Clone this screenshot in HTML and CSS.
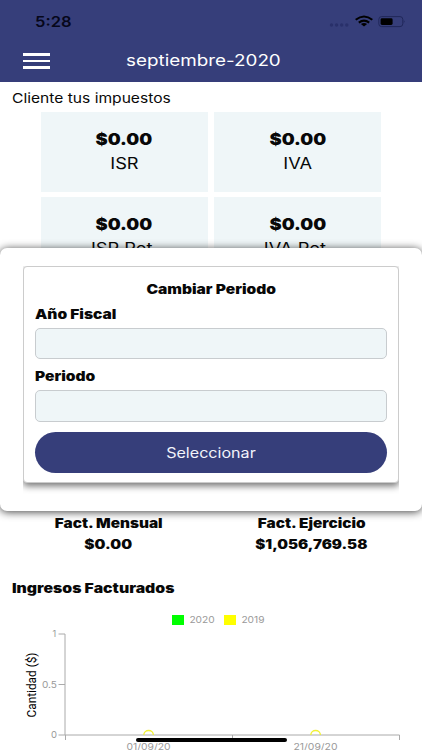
FILE: index.html
```html
<!DOCTYPE html>
<html lang="es">
<head>
  <meta charset="UTF-8" />
  <meta name="viewport" content="width=device-width, initial-scale=1.0" />
  <title>Impuestos</title>
  <link rel="stylesheet" href="styles.css">
</head>
<body>
  <header class="header">
    <div class="status-bar">
      <span class="time">5:28</span>
      <svg class="status-icons" width="76" height="14" viewBox="0 0 76 14">
        <g fill="#29306a">
          <circle cx="2.5" cy="11" r="1.7"/><circle cx="7.6" cy="11" r="1.7"/>
          <circle cx="12.7" cy="11" r="1.7"/><circle cx="17.8" cy="11" r="1.7"/>
        </g>
        <g fill="none" stroke="#000" stroke-width="2">
          <path d="M26.7 5.8Q35 -0.8 43.3 5.8"/>
          <path d="M29.8 8.6Q35 4.6 40.2 8.6"/>
        </g>
        <path d="M31.9 10Q35 7.8 38.1 10L35 12.6Z"/>
        <rect x="49.8" y="2.6" width="24" height="10" rx="2.8" fill="none" stroke="#20275a"/>
        <rect x="51.6" y="4.3" width="12" height="6.7" rx="1.4"/>
        <path d="M74.8 6Q76.6 7.6 74.8 9.3Z" fill="#20275a"/>
      </svg>
    </div>
    <div class="nav-bar">
      <div class="menu-icon"><i></i><i></i><i></i></div>
      <h1 class="title"><span>septiembre-2020</span></h1>
    </div>
  </header>

  <main>
    <p class="intro"><span>Cliente tus impuestos</span></p>

    <div class="taxes">
      <div class="tax"><strong>$0.00</strong><span>ISR</span></div>
      <div class="tax"><strong>$0.00</strong><span>IVA</span></div>
      <div class="tax"><strong>$0.00</strong><span>ISR Ret.</span></div>
      <div class="tax"><strong>$0.00</strong><span>IVA Ret.</span></div>
    </div>

    <div class="totals">
      <div class="total"><span>Fact. Mensual</span><span>$0.00</span></div>
      <div class="total"><span>Fact. Ejercicio</span><span class="amount">$1,056,769.58</span></div>
    </div>

    <h2 class="section-title"><span>Ingresos Facturados</span></h2>

    <div class="legend">
      <i class="green"></i><span>2020</span>
      <i class="yellow"></i><span>2019</span>
    </div>

    <svg class="chart" width="422" height="125" viewBox="0 625 422 125">
      <g fill="none" stroke="#aaa">
        <path d="M58.5 634H65V735M58.5 684.5H65M58.5 735H399.5M65.5 735V740M232.5 735V740M399.5 735V740"/>
      </g>
      <g fill="none" stroke="#f1f135" stroke-width="1.3">
        <path d="M143.8 735A4.8 4.5 0 0 1 153.4 735"/>
        <path d="M310.8 735A4.8 4.5 0 0 1 320.4 735"/>
      </g>
      <g class="ticks">
        <text x="52.5" y="637">1</text>
        <text x="42" y="688" textLength="15" lengthAdjust="spacingAndGlyphs">0.5</text>
        <text x="51" y="738" textLength="6" lengthAdjust="spacingAndGlyphs">0</text>
        <text x="126.5" y="749.5" textLength="44" lengthAdjust="spacingAndGlyphs">01/09/20</text>
        <text x="293.5" y="749.5" textLength="44" lengthAdjust="spacingAndGlyphs">21/09/20</text>
      </g>
      <text class="axis-name" transform="translate(35.5 717.5) rotate(-90)" textLength="65" lengthAdjust="spacingAndGlyphs">Cantidad ($)</text>
    </svg>
  </main>

  <div class="modal">
    <div class="modal-clip">
      <form class="period-form">
        <h3><span>Cambiar Periodo</span></h3>
        <label for="year"><span>Año Fiscal</span></label>
        <input id="year" type="text">
        <label for="period"><span>Periodo</span></label>
        <input id="period" type="text">
        <button type="button"><span>Seleccionar</span></button>
      </form>
    </div>
  </div>

  <div class="home-indicator"></div>
</body>
</html>
```

FILE: styles.css
```css
* {
  box-sizing: border-box;
}

body {
  margin: 0;
  position: relative;
  width: 422px;
  height: 750px;
  overflow: hidden;
  background: #fff;
  color: #080808;
  font-family: Inter, "Liberation Sans", sans-serif;
}

h1, h2, h3, p {
  margin: 0;
}

.time, .title span, .intro span, .tax strong, .tax span,
.total span, .section-title span, .legend span, .period-form span {
  display: inline-block;
  white-space: nowrap;
  transform: scaleX(1.2);
}

.header {
  height: 81.5px;
  background: #363e7a;
}

.status-bar {
  display: flex;
  justify-content: space-between;
  height: 42px;
  padding: 14px 17px 0 34.5px;
}

.header .time {
  color: #06071a;
  font-size: 14.5px;
  line-height: 16px;
  font-weight: 600;
  transform: scaleX(1.14);
  transform-origin: left;
}

.status-icons {
  display: block;
  overflow: visible;
}

.nav-bar {
  display: flex;
  align-items: center;
  height: 38px;
  padding-left: 23px;
}

.menu-icon {
  display: flex;
  flex-direction: column;
  gap: 4px;
  width: 27px;
}

.menu-icon i {
  height: 2.4px;
  background: #fff;
}

.title {
  flex: 1;
  padding-right: 65.5px;
  color: #fff;
  font-size: 15.7px;
  line-height: 20px;
  font-weight: 400;
  text-align: center;
}

.intro {
  padding: 7.5px 12px 0 11.5px;
  font-size: 13px;
  line-height: 18px;
}

.intro span {
  transform-origin: left;
}

.taxes {
  display: grid;
  grid-template-columns: 166.5px 167px;
  grid-auto-rows: 80px;
  gap: 5px 6.5px;
  padding: 5px 0 0 41px;
}

.tax {
  display: flex;
  flex-direction: column;
  align-items: center;
  padding-top: 15px;
  background: #eff6f8;
  font-size: 16px;
  line-height: 24px;
}

.tax strong {
  font-weight: 900;
  transform: scaleX(1.14);
}

.tax span {
  transform: scaleX(1.14);
}

.totals {
  display: flex;
  margin-top: 236px;
  padding-left: 15px;
}

.total {
  display: flex;
  flex-direction: column;
  align-items: center;
  width: 187px;
  font-size: 13px;
  line-height: 21px;
  font-weight: 900;
}

.total span {
  transform: scaleX(1.18);
}

.total .amount {
  transform: scaleX(1.16);
}

.total + .total {
  width: 219px;
}

.section-title {
  margin-top: 22.5px;
  padding-left: 12px;
  font-size: 13px;
  line-height: 20px;
  font-weight: 900;
}

.section-title span {
  transform: scaleX(1.215);
  transform-origin: left;
}

.legend {
  display: flex;
  align-items: center;
  height: 12px;
  margin-top: 16.5px;
  padding-left: 172px;
  color: #999;
  font-size: 8.5px;
}

.legend i {
  width: 12px;
  height: 9.5px;
}

.legend span {
  width: 40px;
  padding-left: 4.5px;
  transform-origin: left;
}

.legend .green {
  background: #0f0;
}

.legend .yellow {
  background: #ff0;
}

.chart {
  display: block;
  margin-top: -1px;
}

.ticks {
  fill: #999;
  font-size: 9px;
}

.axis-name {
  fill: #000;
  font-family: Roboto, sans-serif;
  font-size: 13px;
}

.modal {
  position: absolute;
  top: 247.5px;
  left: 0;
  width: 422px;
  height: 263px;
  padding: 18px 23px 0;
  border-radius: 7px;
  background: #fff;
  box-shadow: 0 1px 9px rgba(0, 0, 0, 0.75);
}

.modal-clip {
  height: 228px;
  overflow: hidden;
}

.period-form {
  display: flex;
  flex-direction: column;
  height: 217.5px;
  padding: 11px 11.5px 0 11px;
  border: 1px solid #ccc;
  border-radius: 4px;
  background: #fff;
  box-shadow: 0 3px 7px rgba(0, 0, 0, 0.55);
  font-size: 13px;
  font-weight: 900;
}

.period-form h3 {
  font-size: 13px;
  line-height: 22px;
  font-weight: 900;
  text-align: center;
}

.period-form h3 span,
.period-form label span {
  transform: scaleX(1.195);
}

.period-form label {
  height: 28px;
  line-height: 29px;
}

.period-form label span {
  transform-origin: left;
}

.period-form input {
  width: 100%;
  height: 31.5px;
  margin: 0 0 3px;
  border: 1px solid #c8cccf;
  border-radius: 5px;
  background: #eff6f8;
}

.period-form button {
  height: 40.5px;
  margin-top: 7.5px;
  padding: 0;
  border: 0;
  border-radius: 20.5px;
  background: #363e7a;
  color: #f2f3fa;
  font-family: inherit;
  font-size: 14px;
}

.period-form button span {
  transform: scaleX(1.15);
}

.home-indicator {
  position: absolute;
  left: 136px;
  top: 737.5px;
  width: 150.5px;
  height: 4.5px;
  border-radius: 3px;
  background: #000;
}
```
